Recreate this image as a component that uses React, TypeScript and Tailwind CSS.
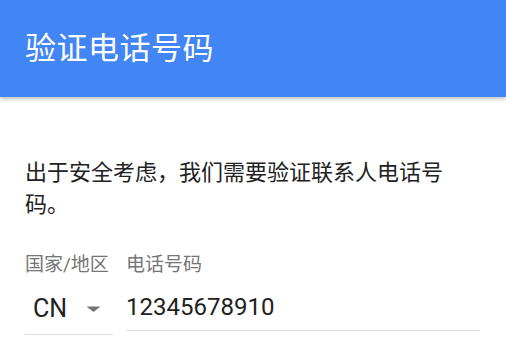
import React from "react";

export default function App() {
  const font = { fontFamily: "Roboto, 'Noto Sans CJK SC', sans-serif" };
  return (
    <div className="w-[506px] h-[341px] bg-white overflow-hidden" style={font}>
      <header className="relative z-10 h-[97px] bg-[#4285f4] flex items-center pl-[25px] shadow-[0_2px_4px_rgba(0,0,0,0.25)]">
        <h1 className="text-white text-[31px] tracking-[0.5px] leading-none font-normal">验证电话号码</h1>
      </header>
      <main className="px-[25px] pt-[60px]">
        <p className="text-[#222222] text-[22px] leading-[32px] max-w-[432px]">
          出于安全考虑，我们需要验证联系人电话号码。
        </p>
        <div className="mt-[32px] flex gap-[13px]">
          <div className="w-[88px] flex flex-col">
            <label className="text-[#757575] text-[19px] leading-[24px] whitespace-nowrap">国家/地区</label>
            <div className="h-[58px] border-b border-[#dcdcdc] flex items-center pl-[8px] pt-[6px]">
              <span className="text-[#212121] text-[25px] leading-none">CN</span>
              <svg className="ml-[19px]" width="15" height="6" viewBox="0 0 15 6">
                <path d="M0.5 0.5 H14.5 L7.5 6 Z" fill="#757575" />
              </svg>
            </div>
          </div>
          <div className="w-[354px] flex flex-col">
            <label className="text-[#757575] text-[19px] leading-[24px] whitespace-nowrap">电话号码</label>
            <div className="h-[54px] border-b border-[#dcdcdc] flex items-center pt-[7px]">
              <span className="text-[#212121] text-[24px] leading-none">12345678910</span>
            </div>
          </div>
        </div>
      </main>
    </div>
  );
}
